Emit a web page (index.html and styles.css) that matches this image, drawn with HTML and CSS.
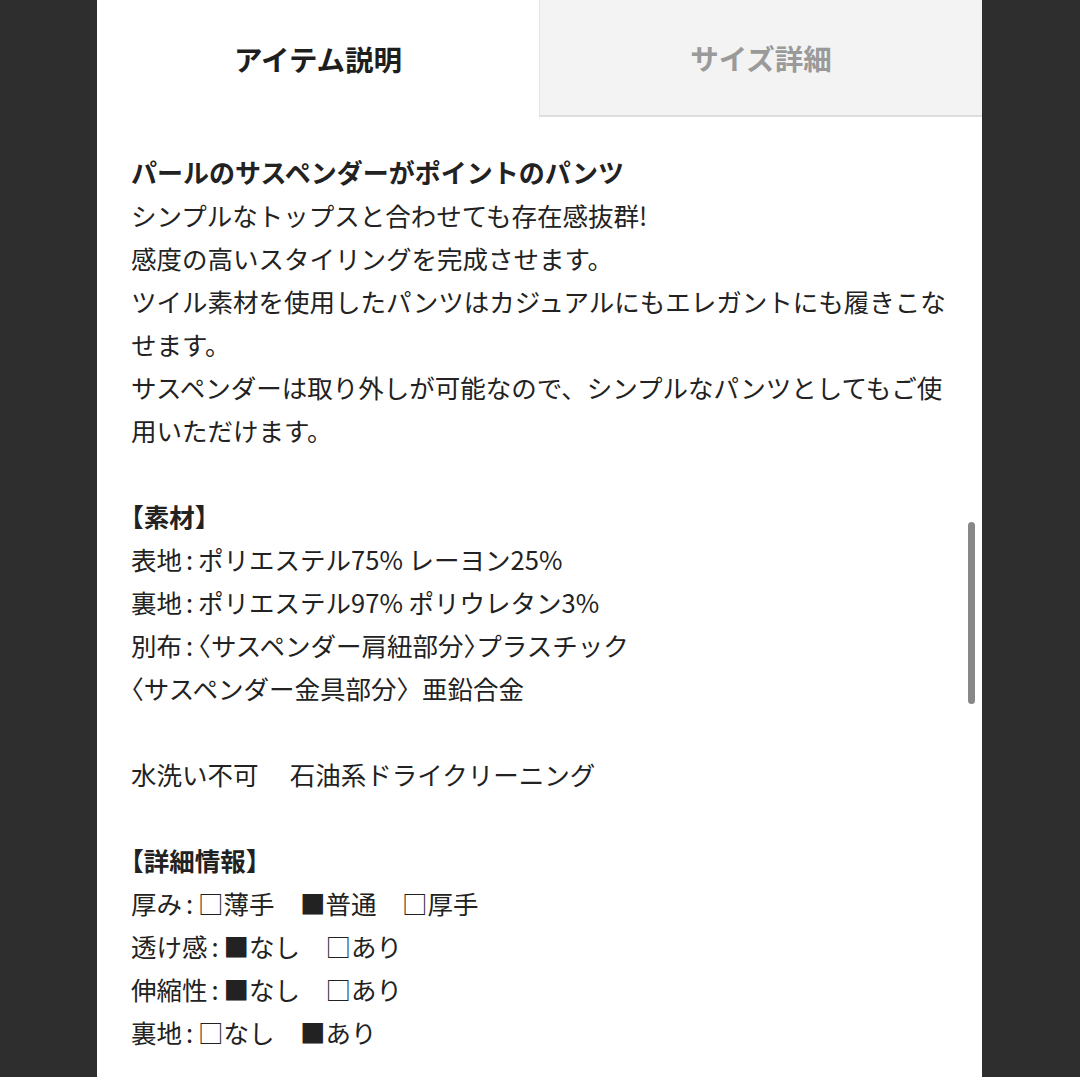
FILE: index.html
```html
<!DOCTYPE html>
<html lang="ja">
<head>
<meta charset="utf-8">
<title>アイテム説明</title>
<link rel="stylesheet" href="styles.css">
</head>
<body>
<div class="panel">
  <div class="tabs">
    <div class="tab tab-active">アイテム説明</div>
    <div class="tab tab-inactive">サイズ詳細</div>
  </div>
  <div class="content">
    <p class="title">パールのサスペンダーがポイントのパンツ</p>
    <p class="block">シンプルなトップスと合わせても存在感抜群!<br>感度の高いスタイリングを完成させます。<br>ツイル素材を使用したパンツはカジュアルにもエレガントにも履きこなせます。<br>サスペンダーは取り外しが可能なので、シンプルなパンツとしてもご使用いただけます。</p>
    <p class="heading"><span class="half">【</span>素材<span class="half">】</span></p>
    <p class="block">表地<span class="colon">:</span>ポリエステル75% レーヨン25%<br>裏地<span class="colon">:</span>ポリエステル97% ポリウレタン3%<br>別布<span class="colon">:</span><span class="half">〈</span>サスペンダー肩紐部分<span class="half">〉</span>プラスチック<br><span class="half">〈</span>サスペンダー金具部分〉亜鉛合金</p>
    <p class="block">水洗い不可　 石油系ドライクリーニング</p>
    <p class="heading"><span class="half">【</span>詳細情報<span class="half">】</span></p>
    <p class="block">厚み<span class="colon">:</span>□薄手　■普通　□厚手<br>透け感<span class="colon">:</span>■なし　□あり<br>伸縮性<span class="colon">:</span>■なし　□あり<br>裏地<span class="colon">:</span>□なし　■あり</p>
  </div>
  <div class="scroll-thumb"></div>
</div>
</body>
</html>
```

FILE: styles.css
```css
html, body {
  margin: 0;
  padding: 0;
}

body {
  background: #2e2e2e;
  font-family: "Noto Sans CJK JP", "Noto Sans", sans-serif;
  color: #222;
}

.panel {
  position: relative;
  width: 885px;
  height: 1077px;
  margin: 0 0 0 97px;
  background: #fff;
  overflow: hidden;
}

.tabs {
  display: flex;
  height: 117px;
}

.tab {
  flex: 1;
  display: flex;
  align-items: center;
  justify-content: center;
  font-size: 28.5px;
  font-weight: 700;
}

.tab-active {
  color: #1e1e1e;
  background: #fff;
}

.tab-inactive {
  color: #9a9a9a;
  background: #f3f3f3;
  border-left: 1px solid #e4e4e4;
  border-bottom: 2px solid #dedede;
}

.content {
  padding: 33px 30px 0 34px;
  font-size: 25.5px;
  line-height: 43px;
}

.content p {
  margin: 0;
}

.title {
  font-size: 26px;
  font-weight: 700;
}

.heading {
  font-weight: 700;
  margin-top: 43px !important;
}

.block + .block {
  margin-top: 43px;
}

.half {
  font-feature-settings: "halt";
}

.colon {
  padding: 0 5px 0 4px;
}

.scroll-thumb {
  position: absolute;
  right: 7px;
  top: 522px;
  width: 7px;
  height: 182px;
  border-radius: 4px;
  background: #888;
}
```
